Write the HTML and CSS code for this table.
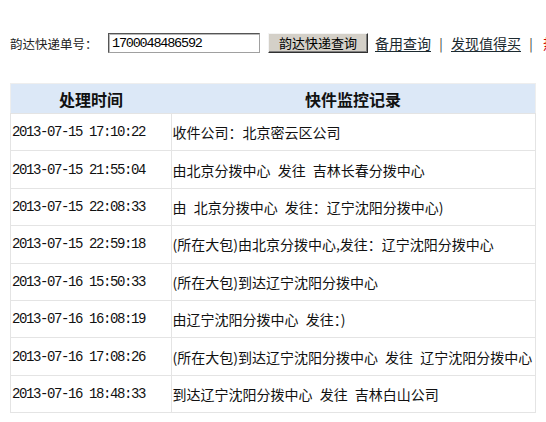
FILE: index.html
```html
<!DOCTYPE html>
<html lang="zh-CN">
<head>
<meta charset="utf-8">
<title>韵达快递查询</title>
<link rel="stylesheet" href="styles.css">
</head>
<body>
<div class="search">
  <span class="label">韵达快递单号：</span>
  <input class="num" type="text" value="1700048486592">
  <button class="btn" type="button">韵达快递查询</button>
  <a class="link" href="#">备用查询</a>
  <span class="sep">|</span>
  <a class="link" href="#">发现值得买</a>
  <span class="sep">|</span>
  <span class="red">热门</span>
</div>
<table class="track">
  <thead>
    <tr><th class="c1">处理时间</th><th class="c2">快件监控记录</th></tr>
  </thead>
  <tbody>
    <tr><td class="time">2013-07-15 17:10:22</td><td class="desc">收件公司：北京密云区公司</td></tr>
    <tr><td class="time">2013-07-15 21:55:04</td><td class="desc">由北京分拨中心 发往 吉林长春分拨中心</td></tr>
    <tr><td class="time">2013-07-15 22:08:33</td><td class="desc">由 北京分拨中心 发往：辽宁沈阳分拨中心)</td></tr>
    <tr><td class="time">2013-07-15 22:59:18</td><td class="desc">(所在大包)由北京分拨中心,发往：辽宁沈阳分拨中心</td></tr>
    <tr><td class="time">2013-07-16 15:50:33</td><td class="desc">(所在大包)到达辽宁沈阳分拨中心</td></tr>
    <tr><td class="time">2013-07-16 16:08:19</td><td class="desc">由辽宁沈阳分拨中心 发往：)</td></tr>
    <tr><td class="time">2013-07-16 17:08:26</td><td class="desc">(所在大包)到达辽宁沈阳分拨中心 发往 辽宁沈阳分拨中心</td></tr>
    <tr><td class="time">2013-07-16 18:48:33</td><td class="desc">到达辽宁沈阳分拨中心 发往 吉林白山公司</td></tr>
  </tbody>
</table>
</body>
</html>
```
FILE: styles.css
```css
html, body {
  margin: 0;
  padding: 0;
  background: #fff;
  overflow: hidden;
}
body {
  font-family: "Noto Sans CJK SC", "Noto Sans", sans-serif;
  color: #111;
  width: 546px;
  height: 422px;
}
.search {
  display: flex;
  align-items: center;
  white-space: nowrap;
  padding: 33px 0 0 10px;
  height: 20px;
}
.label {
  font-size: 12.5px;
  color: #222;
  width: 98px;
  flex: none;
}
.num {
  flex: none;
  box-sizing: border-box;
  width: 152px;
  height: 20px;
  margin: 0;
  padding: 0 3px;
  font-family: "Liberation Mono", monospace;
  font-size: 13.5px;
  letter-spacing: -1.2px;
  color: #000;
  border: 1px solid #a0a0a0;
  border-top-color: #555;
  border-left-color: #555;
  box-shadow: inset 1px 1px 0 #b8b8b8;
  background: #fff;
  outline: none;
}
.btn {
  flex: none;
  box-sizing: border-box;
  width: 100px;
  height: 20px;
  margin: 0 0 0 8px;
  padding: 0;
  font-family: "Noto Sans CJK SC", sans-serif;
  font-size: 13px;
  line-height: 18px;
  color: #000;
  background: #d4d0c8;
  border: 1px solid;
  border-color: #f4f4f4 #303030 #303030 #f4f4f4;
  box-shadow: inset -1px -1px 0 #808080;
}
.link {
  flex: none;
  font-size: 14px;
  color: #1c2a30;
  text-decoration: underline;
  text-underline-offset: 2px;
}
.btn + .link {
  margin-left: 7px;
}
.sep {
  flex: none;
  display: inline-block;
  width: 20px;
  text-align: center;
  font-size: 13px;
  color: #333;
}
.red {
  flex: none;
  font-size: 14px;
  color: #d00000;
  margin-left: 2px;
}
.track {
  margin: 30px 0 0 10px;
  width: 526px;
  border-collapse: collapse;
  table-layout: fixed;
  border: 1px solid #eeeeee;
}
.track th {
  height: 29px;
  padding: 0;
  background: #dce8f7;
  font-size: 16px;
  font-weight: bold;
  color: #111;
  text-align: center;
  border: none;
}
.track .c1 {
  width: 160px;
}
.track td {
  height: 36.4px;
  padding: 0;
  border: 1px solid #e4e4e4;
  vertical-align: middle;
  white-space: nowrap;
  overflow: hidden;
}
.track .time {
  padding-left: 1px;
  font-family: "Liberation Mono", monospace;
  font-size: 14px;
  letter-spacing: -1.4px;
  color: #111;
}
.track .desc {
  padding-left: 1px;
  font-size: 14px;
  word-spacing: 4px;
  color: #111;
}
```
